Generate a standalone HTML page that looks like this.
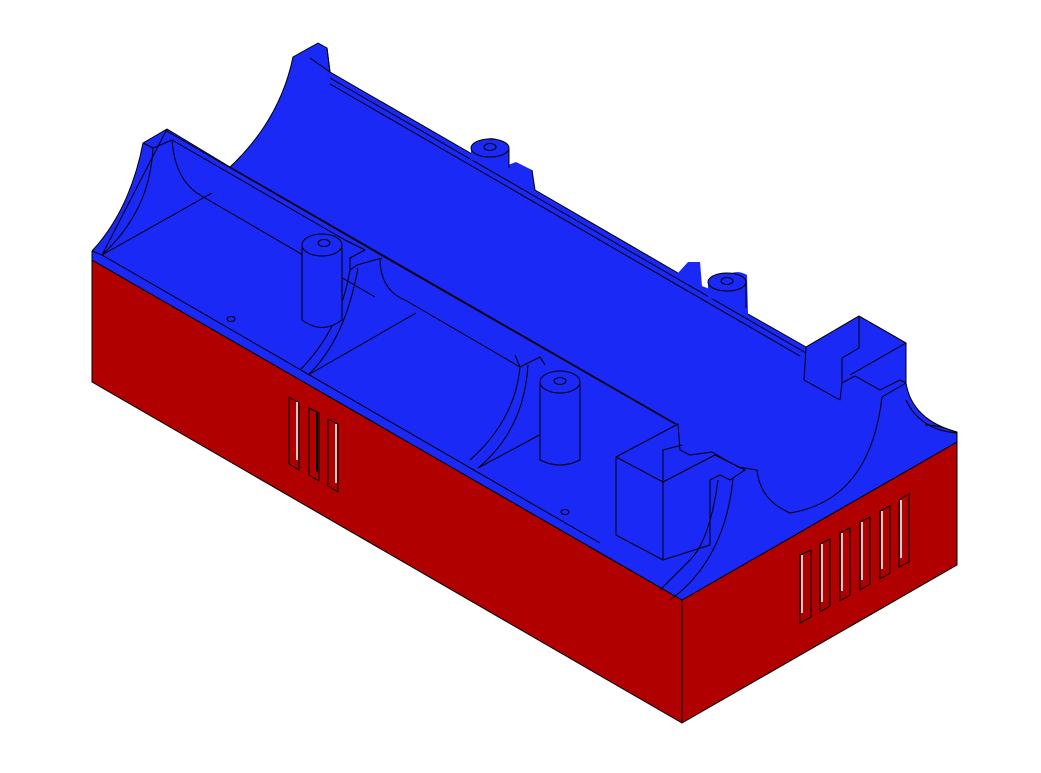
<!DOCTYPE html>
<html><head><meta charset="utf-8"><style>html,body{margin:0;padding:0;background:#fff;}svg{display:block}</style></head>
<body>
<svg width="1041" height="773" viewBox="0 0 1041 773" xmlns="http://www.w3.org/2000/svg" stroke="#000" stroke-width="1" stroke-linejoin="round">
<polygon points="92,260 682,600 682,723 92,382" fill="#b00000"/>
<polygon points="682,600 957,442 957,565 682,723" fill="#b00000"/>
<path d="M92,260 L92,251 Q130,210 143,143 L167,129 L230,167 Q280,120 293,57 L318,43 L327,48 L330,72 L368,94 L472,154 L475,148 Q490,130 505,145 L508,165 L516,162 L532,170 L535,190 L678,273 L688,262 L700,262 L702,286 L712,290 Q730,265 747,275 L748,314 L806,347 L859,316 L906,343 L906,383 Q912,420 957,432 L957,442 L682,600 Z" fill="#1a29f5" stroke="none"/>
<path d="M92,251 Q130,210 143,143 L167,129 L230,167 Q280,120 293,57 L318,43 L327,48 L330,72 L368,94 L472,154 M532,170 L535,190 L678,273 M748,314 L806,347 L859,316 L906,343 L906,383 Q912,420 957,432 L957,442" fill="none"/>
<line x1="92" y1="260" x2="682" y2="600"/><line x1="682" y1="600" x2="957" y2="442"/>
<line x1="682" y1="600" x2="682" y2="723"/>
<line x1="92" y1="251" x2="92" y2="382"/>
<g fill="none">
<path d="M92,251 L102,255 L167,129"/>
<path d="M143,143 L153,148 L172,140"/>
<path d="M102,255 L600,543"/>
<path d="M172,140 L345,240 M165,130 L372,250"/>
<path d="M172,140 Q175,180 200,195 L375,297"/>
<path d="M102,255 L212,193"/>
<path d="M153,148 Q150,210 104,253"/>
<path d="M310,58 L330,72 L327,48"/>
<path d="M230,167 L678,425 M372,250 L675,424"/>
<path d="M345,240 L365,250 L350,258 L350,270 L357,265 L382,258"/>
<path d="M380,258 Q380,290 405,300 L520,367"/>
<path d="M350,270 Q340,330 300,370 M358,268 Q345,340 308,375"/>
<path d="M308,375 L416,313"/>
<path d="M520,367 Q515,420 470,460 M528,365 Q524,430 478,468 M478,468 L545,432"/>
<path d="M515,355 L520,367 L540,357 L545,365"/>
<path d="M330,78 L806,353"/>
<path d="M330,84 L800,356"/>
<path d="M806,347 L804,380 L840,400 L842,383 L855,376 L880,390 L900,380 L906,383 M806,347 L859,316 L859,348 L842,358 L842,383 M859,316 L906,343 L850,375 M882,397 L906,383"/>
<path d="M882,397 Q870,500 790,513 Q760,500 757,470"/>
<path d="M906,400 Q920,430 957,433 Q940,425 925,425"/>
<path d="M616,457 L663,482 L663,560 L616,535 Z M616,457 L678,424 L680,450 L690,455 L712,452 L738,467 L757,470 M663,482 L715,455 L745,470 L730,480 L720,475 L710,480 L710,545 L663,560 M663,482 L663,450 L682,445"/>
<path d="M718,480 Q710,540 690,560 Q670,580 660,590 M733,478 Q725,560 670,600"/>
</g>
<g fill="#1a29f5">
<path d="M302,248 L302,320 Q322,335 342,320 L342,248 Z"/>
<ellipse cx="322" cy="245" rx="20" ry="11"/><ellipse cx="324" cy="243" rx="6" ry="3.5" fill="none"/>
<path d="M540,385 L540,460 Q560,470 580,460 L580,385 Z"/>
<ellipse cx="560" cy="382" rx="20" ry="11"/><ellipse cx="560" cy="381" rx="6" ry="3.5" fill="none"/>
<path d="M471,148 L471,160 L509,170 L509,148 Z" stroke="none"/>
<path d="M509,148 L509,168" fill="none"/>
<ellipse cx="490" cy="148" rx="19" ry="9"/><ellipse cx="490" cy="147" rx="6" ry="3.5" fill="none"/>
<path d="M708,282 L708,298 L746,306 L746,282 Z" stroke="none"/>
<path d="M746,282 L746,308" fill="none"/>
<ellipse cx="727" cy="282" rx="19" ry="9"/><ellipse cx="727" cy="281" rx="6" ry="3.5" fill="none"/>
</g>
<ellipse cx="231" cy="319" rx="4" ry="2.5" fill="none"/>
<ellipse cx="565" cy="512" rx="4" ry="2.5" fill="none"/>
<g fill="#b00000">
<polygon points="289,397 299,403 299,470 289,464"/><line x1="297" y1="402" x2="297" y2="460" stroke="#ccc" stroke-width="2"/>
<polygon points="309,408 319,413 319,481 309,475"/><line x1="317" y1="413" x2="317" y2="472" stroke="#000" stroke-width="2"/>
<polygon points="328,419 338,424 338,492 328,486"/><line x1="336" y1="424" x2="336" y2="483" stroke="#ccc" stroke-width="2"/>
</g>
<g fill="#b00000">
<polygon points="800,555 811,550 811,617 800,623"/><line x1="802" y1="555" x2="802" y2="613" stroke="#ccc" stroke-width="2"/>
<polygon points="820,544 830,539 830,606 820,612"/><line x1="822" y1="544" x2="822" y2="602" stroke="#ccc" stroke-width="2"/>
<polygon points="840,533 850,528 850,595 840,601"/><line x1="842" y1="533" x2="842" y2="591" stroke="#ccc" stroke-width="2"/>
<polygon points="860,522 870,517 870,584 860,590"/><line x1="862" y1="522" x2="862" y2="580" stroke="#ccc" stroke-width="2"/>
<polygon points="880,511 890,506 890,573 880,579"/><line x1="882" y1="511" x2="882" y2="569" stroke="#ccc" stroke-width="2"/>
<polygon points="899,500 909,494 909,562 899,567"/><line x1="901" y1="500" x2="901" y2="558" stroke="#ccc" stroke-width="2"/>
</g>
</svg>
</body></html>
